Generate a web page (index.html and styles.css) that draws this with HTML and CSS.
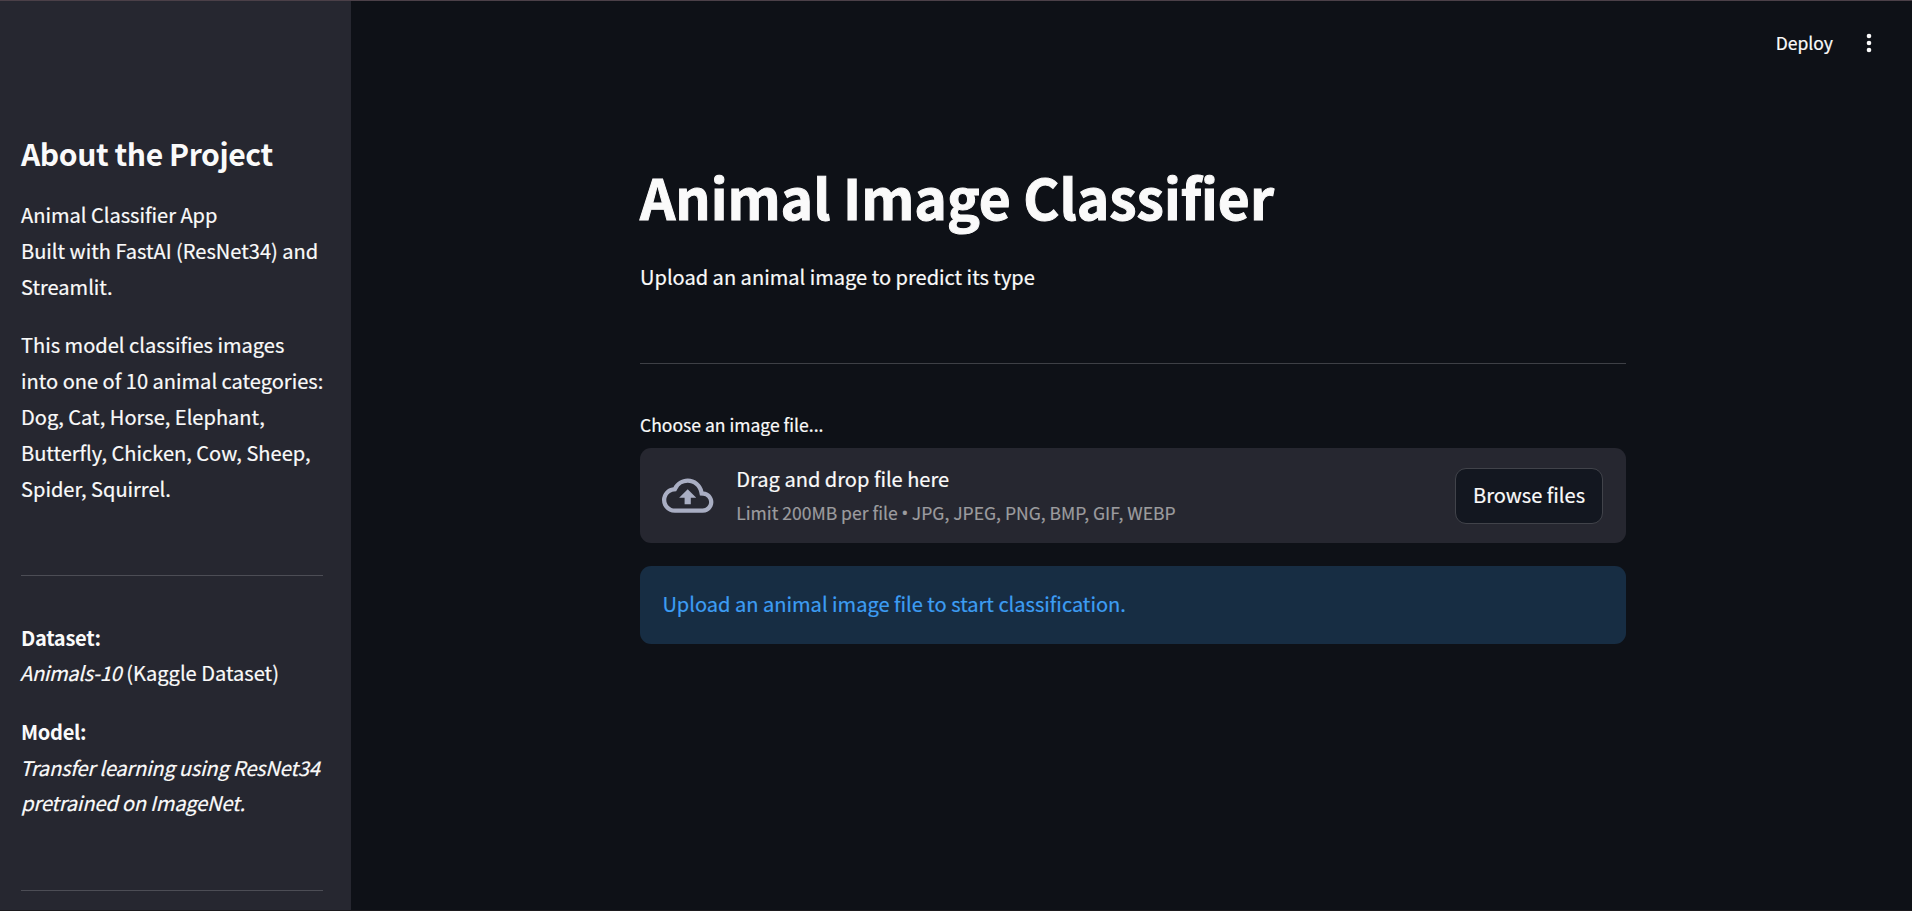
FILE: index.html
```html
<!DOCTYPE html>
<html lang="en">
<head>
<meta charset="utf-8">
<title>Animal Image Classifier</title>
<link rel="stylesheet" href="styles.css">
</head>
<body>
<div class="app">
  <aside class="sidebar">
    <h2 class="side-title">About the Project</h2>
    <p class="copy">Animal Classifier App<br>Built with FastAI (ResNet34) and<br>Streamlit.</p>
    <p class="copy">This model classifies images<br>into one of 10 animal categories:<br>Dog, Cat, Horse, Elephant,<br>Butterfly, Chicken, Cow, Sheep,<br>Spider, Squirrel.</p>
    <hr class="rule side-rule">
    <p class="copy"><strong>Dataset:</strong><br><em class="name">Animals-10</em> (Kaggle Dataset)</p>
    <p class="copy"><strong>Model:</strong><br><em>Transfer learning using ResNet34<br>pretrained on ImageNet.</em></p>
    <hr class="rule side-rule-end">
  </aside>
  <div class="page">
    <header class="toolbar">
      <span class="deploy">Deploy</span>
      <svg class="dots" viewBox="0 0 6 20" width="6" height="20"><circle cx="3" cy="3" r="2.3"/><circle cx="3" cy="10" r="2.3"/><circle cx="3" cy="17" r="2.3"/></svg>
    </header>
    <main class="content">
      <h1 class="title">Animal Image Classifier</h1>
      <p class="copy">Upload an animal image to predict its type</p>
      <hr class="rule main-rule">
      <label class="label">Choose an image file...</label>
      <section class="dropzone">
        <svg class="cloud" viewBox="0 0 24 24"><path d="M19.35 10.04A7.49 7.49 0 0012 4C9.11 4 6.6 5.64 5.35 8.04A5.994 5.994 0 000 14c0 3.31 2.69 6 6 6h13c2.76 0 5-2.24 5-5 0-2.64-2.05-4.78-4.65-4.96zM19 18H6c-2.21 0-4-1.79-4-4 0-2.05 1.53-3.76 3.56-3.97l1.07-.11.5-.95A5.469 5.469 0 0112 6c2.62 0 4.88 1.86 5.39 4.43l.3 1.5 1.53.11A2.98 2.98 0 0122 15c0 1.65-1.35 3-3 3zM8 13h2.55v3h2.9v-3H16l-4-4z"/></svg>
        <div class="drop-text">
          <div class="copy">Drag and drop file here</div>
          <div class="limit">Limit 200MB per file <span class="bullet">•</span> JPG, JPEG, PNG, BMP, GIF, WEBP</div>
        </div>
        <button class="browse">Browse files</button>
      </section>
      <div class="alert">Upload an animal image file to start classification.</div>
    </main>
  </div>
</div>
</body>
</html>
```
FILE: styles.css
```css
* { box-sizing: border-box; margin: 0; padding: 0; }
body {
  background: #0e1117;
  color: #fafafa;
  font-family: "Noto Sans CJK SC", "Noto Sans", sans-serif;
  font-size: 20.06px;
  line-height: 35.84px;
  -webkit-text-stroke: 0.2px currentColor;
}
.app {
  display: flex;
  height: 911px;
  overflow: hidden;
  border-top: 1px solid #4b4048;
  border-bottom: 1px solid #1c1a1e;
}
.sidebar { width: 351px; padding: 131px 28px 0 21px; background: #262730; white-space: nowrap; }
.side-title { font-size: 30.1px; line-height: 43px; font-weight: 700; letter-spacing: -0.43px; margin-bottom: 22.3px; -webkit-text-stroke: 0; }
.copy { line-height: 35.84px; }
.sidebar .copy + .copy { margin-top: 22.4px; }
strong { letter-spacing: -0.3px; -webkit-text-stroke: 0; }
em { letter-spacing: -0.18px; margin-left: -1px; }
.name { letter-spacing: -0.3px; margin-right: 0.5px; }
.rule { border: 0; height: 1px; background: #4c4d55; }
.side-rule { margin: 68.7px 0 43.5px; }
.side-rule-end { margin-top: 69px; }
.page { flex: 1; display: flex; flex-direction: column; }
.toolbar { display: flex; justify-content: flex-end; align-items: center; gap: 33px; height: 84px; padding-right: 40px; font-size: 17.55px; }
.dots { fill: #fafafa; }
.content { width: 986px; margin-left: 289px; padding-top: 74px; }
.title { font-size: 55.2px; line-height: 74px; font-weight: 700; letter-spacing: -0.04px; margin-bottom: 26.4px; white-space: nowrap; -webkit-text-stroke: 1px currentColor; }
.main-rule { margin: 68px 0 44.8px; background: #3e4046; }
.label { display: block; font-size: 17.55px; line-height: 31px; margin-bottom: 8px; }
.dropzone { display: flex; align-items: center; height: 95px; padding: 0 23px 0 22.4px; border-radius: 11px; background: #262730; }
.cloud { width: 51.4px; height: 51.4px; fill: #a9aec3; }
.drop-text { margin-left: 22.5px; }
.limit { font-size: 17.55px; line-height: 34px; color: #9c9c9f; }
.bullet { display: inline-block; width: 6.4px; font-family: "Open Sans", sans-serif; font-size: 19px; line-height: 1; text-indent: -0.4px; }
.browse { margin-left: auto; width: 148px; height: 56px; padding-bottom: 1px; border: 1px solid #41434a; border-radius: 11px; background: #131720; color: inherit; font: inherit; -webkit-text-stroke: inherit; }
.alert { height: 78px; margin-top: 23px; padding: 20.4px 22.4px; border-radius: 11px; background: #172d43; color: #3d9df3; }
```
